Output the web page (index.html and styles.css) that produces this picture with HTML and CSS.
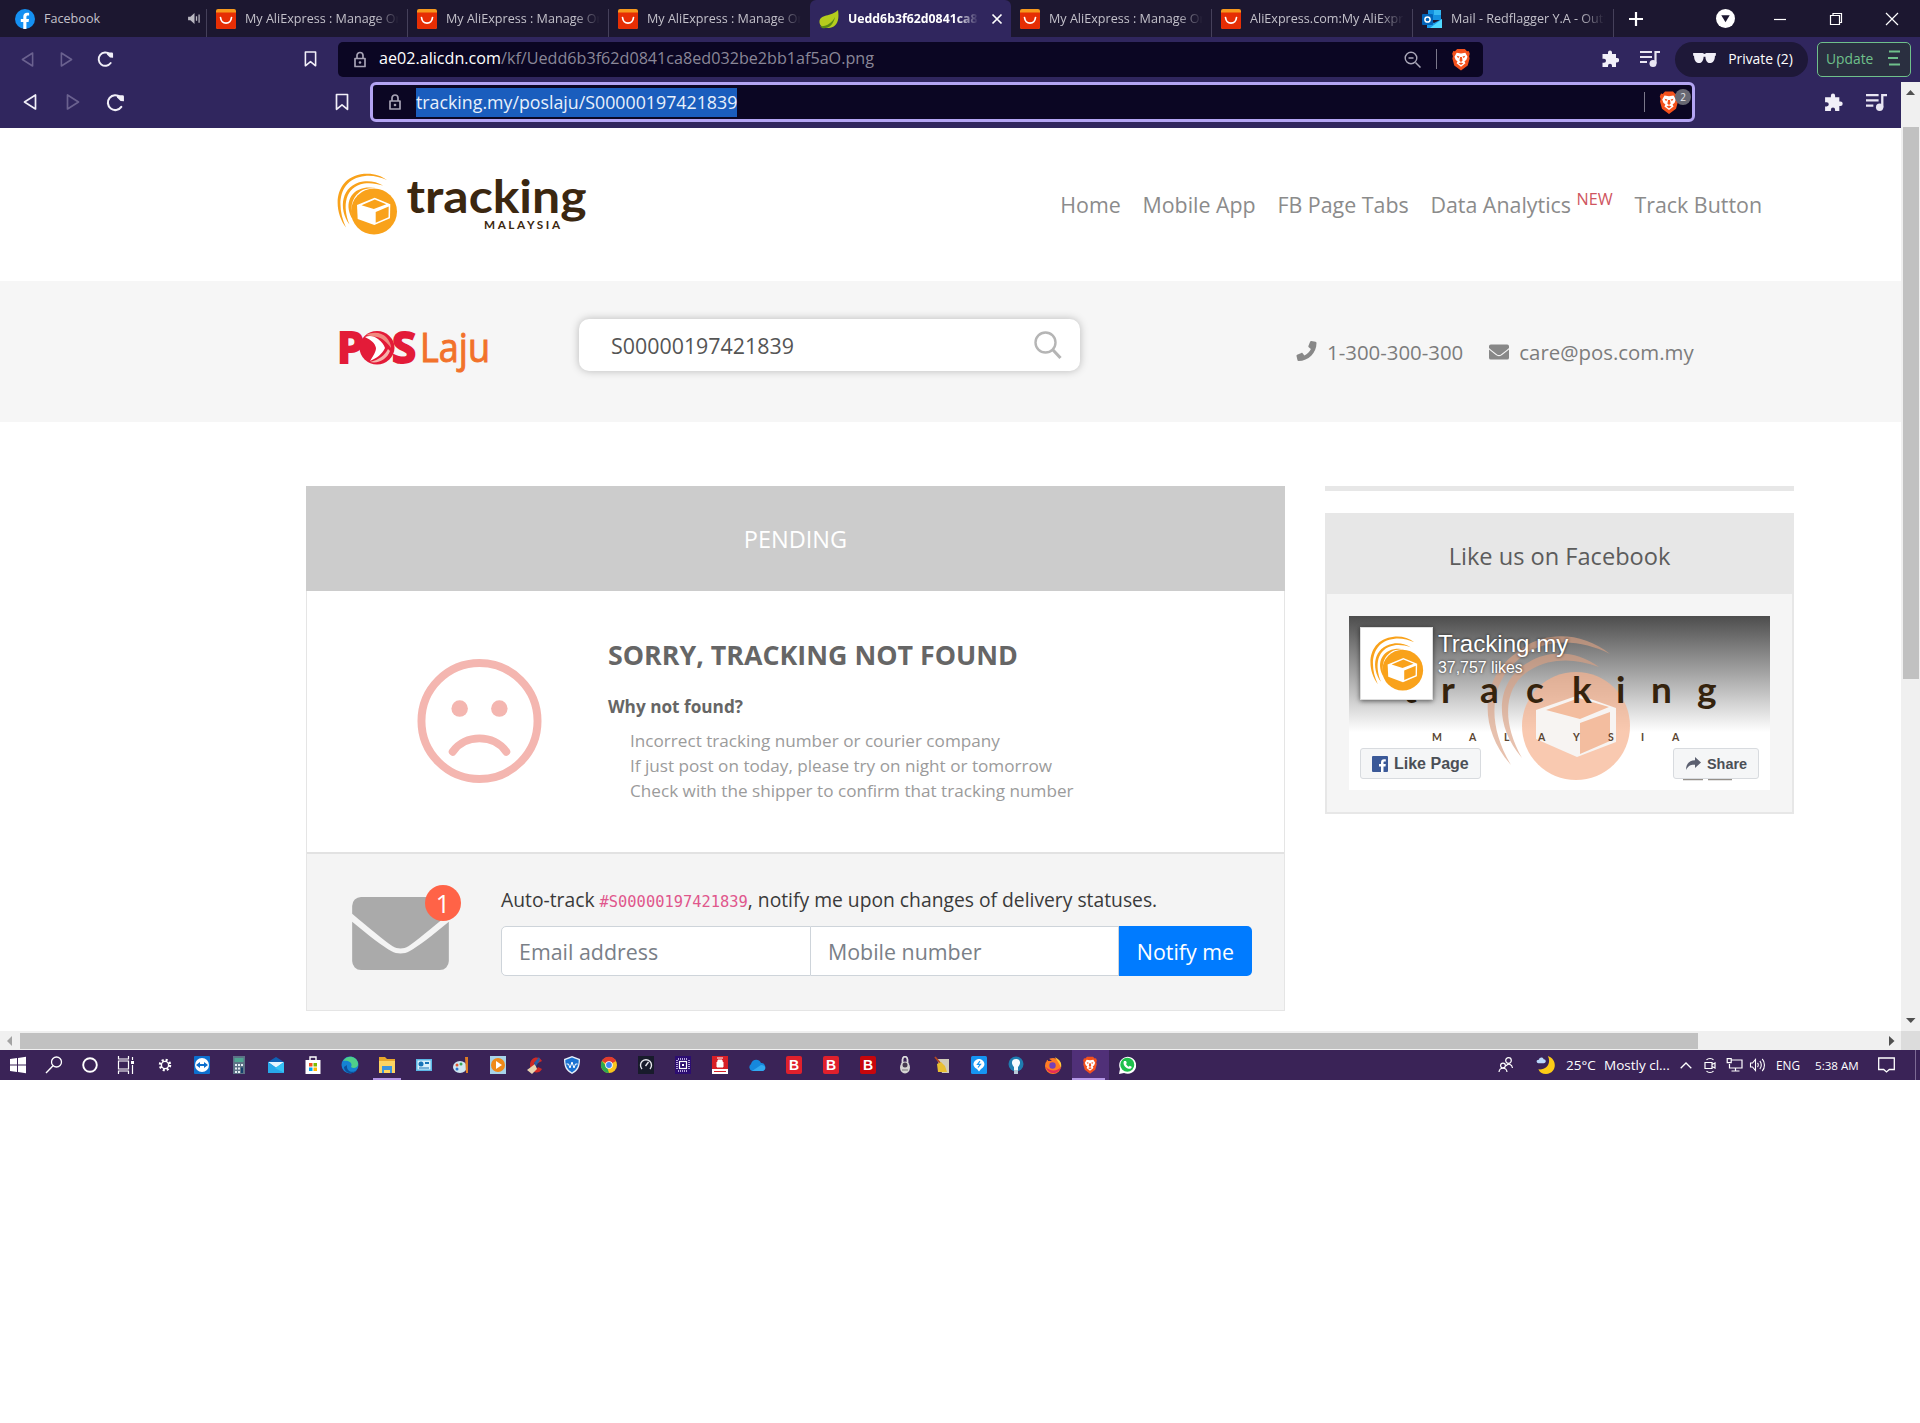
FILE: index.html
```
<!DOCTYPE html>
<html lang="en">
<head>
    <meta charset="UTF-8">
    <meta name="viewport" content="width=device-width, initial-scale=1.0">
    <title>Poslaju Tracking - Tracking.my</title>
    <link rel="stylesheet" href="styles.css">
</head>
<body>
    <!-- shared icons -->
    <svg class="defs" width="0" height="0">
        <symbol id="ali" viewBox="0 0 20 20">
            <rect width="20" height="20" rx="2" fill="#f7981d"/>
            <path d="M0 3.5h20V18a2 2 0 0 1-2 2H2a2 2 0 0 1-2-2z" fill="#e62e04"/>
            <path d="M4.5 8.5c1 7.5 10 7.5 11 0" fill="none" stroke="#fff" stroke-width="1.7" stroke-linecap="round"/>
        </symbol>
        <symbol id="lock" viewBox="0 0 14 16">
            <path d="M2 7h10v8H2zM4 7V4a3 3 0 0 1 6 0v3" fill="none" stroke="#a7a3b5" stroke-width="1.7" stroke-linejoin="round"/>
            <circle cx="7" cy="11" r="1.3" fill="#a7a3b5"/>
        </symbol>
        <symbol id="back" viewBox="0 0 14 18">
            <path d="M12.5 2v14L1.5 9z" fill="none" stroke="currentColor" stroke-width="1.7" stroke-linejoin="round"/>
        </symbol>
        <symbol id="reload" viewBox="0 0 18 18">
            <path d="M14.5 13.2A7 7 0 1 1 13.5 4" fill="none" stroke="#f1eff8" stroke-width="2" stroke-linecap="round"/>
            <path d="M10.5 2.2h5.2a1.3 1.3 0 0 1 1.3 1.3v4.2l-3.2-.2-3.3-3.3z" fill="#f1eff8"/>
        </symbol>
        <symbol id="bookmark" viewBox="0 0 14 18">
            <path d="M1.5 1.5h11v14.8L7 11.8l-5.5 4.5z" fill="none" stroke="#f1eff8" stroke-width="1.7" stroke-linejoin="round"/>
        </symbol>
        <symbol id="brave" viewBox="0 0 20 24">
            <path d="M6 1h8l2.300 2.400L18 3l1.200 3-.8 2.500L19 11l-2 7.200-7 5.300-7-5.300L1 11l.6-2.500L.8 6 2 3l1.700.4z" fill="#f4511c"/>
            <path d="M5.500 5l4.500.7 4.500-.7 2.300 4-1.200 3.200-2 1.800 1 2L10 19.500 5.400 16l1-2-2-1.800L3.200 9z" fill="#fff"/>
            <path d="M5.500 8.200l3 .7-1.500 1.800zM14.500 8.200l-3 .7 1.500 1.800zM9 9.500l-.6 3.800L10 14.500l1.600-1.200-.6-3.800zM7.500 16l2.500-1 2.500 1-2.500 1.700z" fill="#f4511c"/>
        </symbol>
        <symbol id="puzzle" viewBox="0 0 18 18">
            <path d="M7 2.500a2 2 0 0 1 4 0V4h4v4h1a2.200 2.200 0 0 1 0 4.400h-1V17h-4v-1.200a2 2 0 0 0-4 0V17H1.500v-4.300H3a2 2 0 0 0 0-4H1.500V4H7z" fill="#f1eff8"/>
        </symbol>
        <symbol id="music" viewBox="0 0 20 18">
            <path d="M0 2h12M0 7h12M0 12h7" stroke="#e9e6f3" stroke-width="2"/>
            <path d="M15.500 13.500V2H20" fill="none" stroke="#e9e6f3" stroke-width="2.200"/>
            <circle cx="13" cy="13.500" r="3.500" fill="#e9e6f3"/>
        </symbol>
        <symbol id="box" viewBox="0 0 62 62">
            <path d="M10 54.500C-4 36-2 4 28 .8c9-.8 17 1.500 23 6.200-7-3-14-4.700-22-4C2 6 0 33 10 54.500z" fill="#f9a21b"/>
            <path d="M13.500 51.500C2 36 5 12 27 8.600c7-1 14 .4 20 4-6-2-13-3-19-2C9 14 6 33 13.500 51.500z" fill="#f9a21b"/>
            <path d="M17 47C8 33 13 18 28 15c4-.8 8-.5 12 0-8 0-13 1-17 4.500C15 26 14 36 17 47z" fill="#f9a21b"/>
            <circle cx="38" cy="38.500" r="23" fill="#f9a21b"/>
            <path d="M38.700 24.700l15.600 6.600-.3 14L38.300 52l-16.600-6L21 32z" fill="#fff"/>
            <path d="M25.500 32.200l13.300-5.700 11.500 4.800-12.500 4.800zM39.700 39l13-5.400-.2 10.600-12.800 5.500z" fill="#f9a21b"/>
        </symbol>
        <symbol id="envelope" viewBox="0 0 98 74">
            <path d="M0 17V9a9 9 0 0 1 9-9h80a9 9 0 0 1 9 9v8C80 32 66 44 57 50c-5 3-11 3-16 0C32 44 18 32 0 17z" fill="currentColor"/>
            <path d="M0 25c17 14 31 25 40 30 5 3 13 3 18 0 9-5 23-16 40-30v40a9 9 0 0 1-9 9H9a9 9 0 0 1-9-9z" fill="currentColor"/>
        </symbol>
    </svg>

    <div class="tabs">
        <div class="tab">
            <svg class="fav" viewBox="0 0 20 20"><circle cx="10" cy="10" r="10" fill="#1590f2"/><path d="M8.300 20v-7H5.800v-3h2.500V7.800c0-2.600 1.500-4 3.800-4 1 0 2 .2 2 .2v2.500h-1.200c-1.200 0-1.500.7-1.500 1.500v2h2.600l-.4 3h-2.200v7z" fill="#fff"/></svg>
            <span class="tab-title">Facebook</span>
            <svg class="sound" viewBox="0 0 14 12"><path d="M0 4h2.500L7 0v12L2.500 8H0z" fill="#b9b7c1"/><path d="M9.200 3.500v5M12 1.500v9" stroke="#b9b7c1" stroke-width="1.400"/></svg>
        </div>
        <div class="tab"><svg class="fav"><use href="#ali"/></svg><span class="tab-title fade">My AliExpress : Manage Orders</span></div>
        <div class="tab"><svg class="fav"><use href="#ali"/></svg><span class="tab-title fade">My AliExpress : Manage Orders</span></div>
        <div class="tab no-line"><svg class="fav"><use href="#ali"/></svg><span class="tab-title fade">My AliExpress : Manage Orders</span></div>
        <div class="tab active">
            <svg class="fav" viewBox="0 0 20 20"><path d="M19 1c1.500 10-.5 17-9 18-5 .5-9-1.500-9.500-5.500C0 5 12 8 19 1z" fill="#b5cc1d"/><path d="M1 17c6 1 12-3 15-9-2 9-7 12-13 11z" fill="#5a8a12"/></svg>
            <span class="tab-title fade">Uedd6b3f62d0841ca8ed032</span>
            <svg class="close" viewBox="0 0 12 12"><path d="M1.500 1.500l9 9M10.500 1.500l-9 9" stroke="#fff" stroke-width="1.700"/></svg>
        </div>
        <div class="tab"><svg class="fav"><use href="#ali"/></svg><span class="tab-title fade">My AliExpress : Manage Orders</span></div>
        <div class="tab"><svg class="fav"><use href="#ali"/></svg><span class="tab-title fade">AliExpress.com:My AliExpress</span></div>
        <div class="tab">
            <svg class="fav" viewBox="0 0 20 20"><path d="M6 1h13v10H6z" fill="#1490df"/><path d="M12 1h7v5h-7z" fill="#35b8f1"/><path d="M5 10l7 4 8-4v9H5z" fill="#1a9be8"/><path d="M20 10v9H8z" fill="#50d9ff"/><rect y="5" width="11" height="11" rx="1" fill="#0364b8"/><circle cx="5.500" cy="10.500" r="2.600" fill="none" stroke="#fff" stroke-width="1.500"/></svg>
            <span class="tab-title fade">Mail - Redflagger Y.A - Outlook</span>
        </div>
        <svg class="plus" viewBox="0 0 16 16"><path d="M8 1v14M1 8h14" stroke="#fff" stroke-width="2.200"/></svg>
        <svg class="search-tabs" viewBox="0 0 18 18"><circle cx="9" cy="9" r="9" fill="#fff"/><path d="M5 6h8l-4 6.500z" fill="#1c1730"/></svg>
        <svg class="win-btn" viewBox="0 0 14 14"><path d="M1 7.500h12" stroke="#fff" stroke-width="1.200"/></svg>
        <svg class="win-btn" viewBox="0 0 14 14"><path d="M1.500 3.500h9v9h-9zM4 3.500v-2h8.500v9h-2" fill="none" stroke="#fff" stroke-width="1.200"/></svg>
        <svg class="win-btn" viewBox="0 0 14 14"><path d="M1 1l12 12M13 1L1 13" stroke="#fff" stroke-width="1.200"/></svg>
    </div>

    <div class="toolbar">
        <svg class="nav-icon dim"><use href="#back"/></svg>
        <svg class="nav-icon fwd dim"><use href="#back"/></svg>
        <svg class="reload"><use href="#reload"/></svg>
        <svg class="bookmark"><use href="#bookmark"/></svg>
        <div class="url">
            <svg class="lock"><use href="#lock"/></svg>
            <span class="url-text"><b>ae02.alicdn.com</b>/kf/Uedd6b3f62d0841ca8ed032be2bb1af5aO.png</span>
            <svg class="zoom" viewBox="0 0 17 17"><circle cx="7" cy="7" r="5.800" fill="none" stroke="#aaa7b8" stroke-width="1.400"/><path d="M4.500 7h5M11.500 11.500l5 5" stroke="#aaa7b8" stroke-width="1.500"/></svg>
            <i class="sep"></i>
            <svg class="brave"><use href="#brave"/></svg>
        </div>
        <svg class="puzzle"><use href="#puzzle"/></svg>
        <svg class="music"><use href="#music"/></svg>
        <div class="private">
            <svg viewBox="0 0 25 11"><path d="M0 0h10.500l2 1 2-1H25v3h-1c0 5-2 8-5.500 8-3 0-5-3-5-7h-2c0 4-2 7-5 7C3 11 1 8 1 3H0z" fill="#f1eff8"/></svg>
            <span>Private (2)</span>
        </div>
        <div class="update">
            <span>Update</span>
            <svg viewBox="0 0 12 16"><path d="M1 1.500h11M0 8h10M1 14.500h11" stroke="#6fc08b" stroke-width="1.800"/></svg>
        </div>
    </div>

    <div class="window">
        <div class="view">
            <div class="toolbar second">
                <svg class="nav-icon"><use href="#back"/></svg>
                <svg class="nav-icon fwd dim"><use href="#back"/></svg>
                <svg class="reload"><use href="#reload"/></svg>
                <svg class="bookmark"><use href="#bookmark"/></svg>
                <div class="url focus">
                    <svg class="lock"><use href="#lock"/></svg>
                    <span class="selected">tracking.my/poslaju/S00000197421839</span>
                    <i class="sep"></i>
                    <div class="shield">
                        <svg class="brave"><use href="#brave"/></svg>
                        <span class="count">2</span>
                    </div>
                </div>
                <svg class="puzzle"><use href="#puzzle"/></svg>
                <svg class="music"><use href="#music"/></svg>
            </div>

            <div class="header">
                <svg class="logo" viewBox="0 0 250 64">
                    <use href="#box" width="62" height="62"/>
                    <text x="70.500" y="40.300" textLength="180" lengthAdjust="spacingAndGlyphs" class="logo-name">tracking</text>
                    <text x="148" y="56" textLength="76" class="logo-sub">MALAYSIA</text>
                </svg>
                <div class="menu">
                    <a>Home</a>
                    <a>Mobile App</a>
                    <a>FB Page Tabs</a>
                    <a>Data Analytics <sup>NEW</sup></a>
                    <a>Track Button</a>
                </div>
            </div>

            <div class="band">
                <svg class="poslaju" viewBox="0 0 152 44">
                    <text x="-1" y="32.300" class="pos">P</text>
                    <text x="54" y="32.300" class="pos" textLength="24" lengthAdjust="spacingAndGlyphs">S</text>
                    <ellipse cx="39" cy="16.700" rx="17.500" ry="16.700" fill="#e31b38"/>
                    <path d="M28 4c8-4 16-2 20 2 3 3 5 7 5 11-4-6-9-10-14-11-4-1-8-1-11-2z" fill="#f08a80"/>
                    <path d="M27 6c5-2 9-1 13 2 4 3 6 6 7 9-3 6-8 10-15 13 3-5 6-9 6-13-1-5-5-8-11-11z" fill="#fff"/>
                    <path d="M32 31c9-2 15-7 18-13l2 2c-3 8-11 13-20 11z" fill="#f6b2ab"/>
                    <text x="82" y="31.300" textLength="70" lengthAdjust="spacingAndGlyphs" class="laju">Laju</text>
                </svg>
                <div class="search">
                    <span>S00000197421839</span>
                    <svg viewBox="0 0 28 28"><circle cx="11.500" cy="11.500" r="10" fill="none" stroke="#b5b5b5" stroke-width="2.400"/><path d="M19 19l7.500 8" stroke="#b5b5b5" stroke-width="3"/></svg>
                </div>
                <svg class="phone" viewBox="0 0 20 21"><path d="M19 .8L14.800 0c-.5 0-.9.200-1.100.6l-1.800 4.500c-.2.400 0 .9.300 1.100l2.200 1.800c-1.300 2.900-3.600 5.200-6.500 6.500l-1.800-2.300c-.3-.3-.8-.5-1.200-.3L.6 13.800c-.5.2-.7.600-.6 1.100l1 4.300c.1.500.5.800 1 .8C12 20 20 12 20 2c0-.6-.4-1.100-1-1.200z" fill="#888"/></svg>
                <span class="contact">1-300-300-300</span>
                <svg class="mail"><use href="#envelope"/></svg>
                <span class="contact">care@pos.com.my</span>
            </div>

            <div class="main">
                <div class="card">
                    <div class="status">PENDING</div>
                    <div class="not-found">
                        <svg class="sad" viewBox="0 0 126 126"><g fill="none" stroke="#f4b6b0"><circle cx="63" cy="63" r="58.500" stroke-width="8"/><path d="M36 94c12-18 42-18 54 0" stroke-width="8" stroke-linecap="round"/></g><circle cx="43" cy="50.500" r="8.300" fill="#f4b6b0"/><circle cx="83" cy="50.500" r="8.300" fill="#f4b6b0"/></svg>
                        <div>
                            <h2>SORRY, TRACKING NOT FOUND</h2>
                            <h4>Why not found?</h4>
                            <ul>
                                <li>Incorrect tracking number or courier company</li>
                                <li>If just post on today, please try on night or tomorrow</li>
                                <li>Check with the shipper to confirm that tracking number</li>
                            </ul>
                        </div>
                    </div>
                    <div class="notify">
                        <div class="mail-badge">
                            <svg><use href="#envelope"/></svg>
                            <span>1</span>
                        </div>
                        <div class="notify-form">
                            <p>Auto-track <code>#S00000197421839</code>, notify me upon changes of delivery statuses.</p>
                            <div class="fields">
                                <input type="text" placeholder="Email address">
                                <input type="text" placeholder="Mobile number">
                                <button>Notify me</button>
                            </div>
                        </div>
                    </div>
                </div>

                <div class="side">
                    <div class="bar"></div>
                    <div class="fb">
                        <div class="fb-title">Like us on Facebook</div>
                        <div class="fb-body">
                            <div class="cover">
                                <svg class="cover-art" viewBox="0 0 421 174">
                                    <defs><linearGradient id="shade" x1="0" y1="0" x2="0" y2="1"><stop offset="0" stop-color="#4d4d4d"/><stop offset=".5" stop-color="#a5a5a5"/><stop offset="1" stop-color="#fff"/></linearGradient></defs>
                                    <rect width="421" height="174" fill="#fff"/>
                                    <rect width="421" height="116" fill="url(#shade)"/>
                                    <g fill="#dba183" opacity=".65">
                                        <path d="M162 149C126 108 135 60 166 38c26-24 66-23 95 0-30-15-66-17-91 5-28 22-34 62-8 106z"/>
                                        <path d="M173 142C141 104 150 62 180 46c20-12 47-12 70 5-24-9-48-9-67 2-26 14-33 48-10 89z"/>
                                    </g>
                                    <circle cx="227" cy="110" r="54" fill="#f7b28e" opacity=".7"/>
                                    <path d="M187 94l43-15 37 13v34l-39 15-41-18z" fill="#f7f4f2"/>
                                    <path d="M197 94l33-12 30 9-29 12zM231 107l30-11v29l-30 13z" fill="#f3bd9f"/>
                                    <text y="87" x="54 92 131 177 223 267 302 348" class="cover-name">tracking</text>
                                    <text y="125" x="83 120 155 189 224 259 292 323" class="cover-sub">MALAYSIA</text>
                                    <path d="M334 163.500h20M359 163.500h24" stroke="#95908a" stroke-width="1.500"/>
                                </svg>
                                <div class="avatar"><svg><use href="#box"/></svg></div>
                                <div class="fb-name">Tracking.my<small>37,757 likes</small></div>
                                <div class="fb-btn like"><svg viewBox="0 0 16 16"><rect width="16" height="16" rx="1" fill="#3b5998"/><path d="M9 16v-5.500H7V8h2V6.500C9 4.300 10.200 3.300 12 3.300h1.800v2.300h-1.200c-.8 0-1.100.4-1.100 1.100V8h2.300l-.3 2.500h-2V16z" fill="#fff"/></svg>Like Page</div>
                                <div class="fb-btn share"><svg viewBox="0 0 15 14"><path d="M9 0l6 5.500L9 11V7.800C5 7.500 2.500 8.500 0 13c0-6 3-9.500 9-9.800z" fill="#5c6070"/></svg>Share</div>
                            </div>
                        </div>
                    </div>
                </div>
            </div>

            <div class="hscroll">
                <svg viewBox="0 0 20 19"><path d="M12 5v10L7 10z" fill="#a3a3a3"/></svg>
                <div class="hthumb"></div>
                <svg class="end" viewBox="0 0 20 19"><path d="M8 5v10l5.500-5z" fill="#505050"/></svg>
            </div>
        </div>
        <div class="vscroll">
            <svg viewBox="0 0 19 45"><path d="M5 13h9L9.500 8z" fill="#505050"/></svg>
            <div class="vthumb"></div>
            <svg class="end" viewBox="0 0 19 21"><path d="M5 8h9.500l-4.700 5z" fill="#505050"/></svg>
            <div class="corner"></div>
        </div>
    </div>

    <div class="taskbar">
        <div class="sys"><svg viewBox="0 0 18 18"><path d="M1 3l7-1v6.500H1zM9 1.900L17 .8v7.700H9zM1 9.500h7V16l-7-1zM9 9.500h8v7.700l-8-1.100z" fill="#fff"/></svg></div>
        <div class="sys"><svg viewBox="0 0 18 18"><circle cx="11.500" cy="6" r="5" fill="none" stroke="#fff" stroke-width="1.300"/><path d="M8 9.800L1 17" stroke="#fff" stroke-width="1.400"/></svg></div>
        <div class="sys"><svg viewBox="0 0 18 18"><circle cx="9" cy="9" r="6.800" fill="none" stroke="#fff" stroke-width="1.900"/></svg></div>
        <div class="sys wide"><svg viewBox="0 0 18 18"><path d="M1.500 5h10v8h-10zM1.500 0v3h10V0M1.500 18v-3h10v3M15.500 1v3M15.500 9v9" fill="none" stroke="#fff" stroke-width="1.200"/><path d="M14 5h3v3h-3z" fill="#fff"/></svg></div>

        <div class="app"><svg viewBox="0 0 18 18"><circle cx="9" cy="9" r="5" fill="none" stroke="#fff" stroke-width="2.500" stroke-dasharray="2 1.930"/><circle cx="9" cy="9" r="3.600" fill="none" stroke="#fff" stroke-width="1.400"/></svg></div>
        <div class="app"><svg viewBox="0 0 18 18"><rect x="1" width="16" height="18" rx="1" fill="#0d6fce"/><circle cx="9" cy="9" r="7" fill="#fff"/><path d="M3 9l4-3v2h4V6l4 3-4 3v-2H7v2z" fill="#0d6fce"/></svg></div>
        <div class="app"><svg viewBox="0 0 18 18"><rect x="3" width="12" height="18" fill="#5d7286"/><path d="M4.500 2h9v4h-9z" fill="#4fa592"/><path d="M5 8h2v2H5zM8 8h2v2H8zM11 8h2v2h-2zM5 11.500h2v2H5zM8 11.500h2v2H8zM5 15h2v2H5zM8 15h2v2H8z" fill="#e6eef4"/><path d="M11 11.500h2V17h-2z" fill="#15406e"/></svg></div>
        <div class="app"><svg viewBox="0 0 18 18"><path d="M1 6l8-5 8 5v11H1z" fill="#0f62b5"/><path d="M1 6h16l-8 6z" fill="#e6f6ff"/><path d="M1 6l16 11H1z" fill="#28a8ea"/><path d="M17 6L8 12l9 5z" fill="#35c3f5"/></svg></div>
        <div class="app"><svg viewBox="0 0 18 18"><path d="M6 4V1h6v3" fill="none" stroke="#fff" stroke-width="1.400"/><path d="M1.500 4h15v14h-15z" fill="#fff"/><path d="M5 7h3.500v3.500H5z" fill="#f25022"/><path d="M9.500 7H13v3.500H9.500z" fill="#7fba00"/><path d="M5 11.500h3.500V15H5z" fill="#00a4ef"/><path d="M9.500 11.500H13V15H9.500z" fill="#ffb900"/></svg></div>
        <div class="app"><svg viewBox="0 0 18 18"><circle cx="9" cy="9" r="8.500" fill="#1582d2"/><path d="M2 5c4-7 14-5 15 2 1 5-5 6-7 4 2-4-2-7-8-6z" fill="#4fd08a"/><path d="M6 9c-1 6 5 9 10 5-4 6-13 3-13-3z" fill="#0c4f9c"/></svg></div>
        <div class="app open"><svg viewBox="0 0 18 18"><path d="M1 1h6l2 2h8v14H1z" fill="#e8a72b"/><path d="M1 5h16v12H1z" fill="#fcd462"/><path d="M4 10h10v7h-2v-3H6v3H4z" fill="#3c95dd"/></svg></div>
        <div class="app"><svg viewBox="0 0 18 18"><rect x="1" y="3" width="16" height="12" fill="#5cb8e6"/><rect x="2.500" y="4.500" width="13" height="9" fill="#d9f0fb"/><circle cx="6" cy="8" r="2.500" fill="#1673b8"/><path d="M10 6h4v2h-4zM4 11.500h10v1H4z" fill="#1673b8"/></svg></div>
        <div class="app"><svg viewBox="0 0 18 18"><ellipse cx="8" cy="11" rx="7" ry="6" fill="#cfe6f2"/><circle cx="5" cy="9" r="1.500" fill="#e4572e"/><circle cx="9" cy="8" r="1.500" fill="#3aa757"/><circle cx="5" cy="13" r="1.500" fill="#2a78d0"/><path d="M13 1h3v16h-2z" fill="#df7b23"/></svg></div>
        <div class="app"><svg viewBox="0 0 18 18"><rect x="1" width="16" height="18" fill="#a8d3ea"/><circle cx="9" cy="9" r="7" fill="#f08a18"/><path d="M7 5l6 4-6 4z" fill="#fff"/></svg></div>
        <div class="app"><svg viewBox="0 0 18 18"><path d="M16 5C13-1 4 1 4 9s9 10 12 4l-4-2c-1 3-4 1-4-2s3-5 4-2z" fill="#cf2a25"/><path d="M1 14l8-6 2 5-5 5z" fill="#e9d5b0"/><path d="M8 7l5-6 1 3-4 6z" fill="#2a5fa5"/></svg></div>
        <div class="app"><svg viewBox="0 0 18 18"><path d="M9 0l8 3c0 8-2 12-8 15C3 15 1 11 1 3z" fill="#e6f1fb"/><path d="M9 1.500l6.700 2.500c0 6-2 9.500-6.700 12.500-4.700-3-6.700-6.500-6.700-12.500z" fill="#1b72d2"/><path d="M3.500 8h2l1.500 4 2-6 2 6 1.500-4h2" fill="none" stroke="#fff" stroke-width="1"/></svg></div>
        <div class="app"><svg viewBox="0 0 18 18"><circle cx="9" cy="9" r="8" fill="#f9c51d"/><path d="M9 9L2 5a8 8 0 0 1 14 0z" fill="#e33b2e"/><path d="M2 5l5 6 2 6A8 8 0 0 1 2 5z" fill="#2da94f"/><circle cx="9" cy="9" r="3.800" fill="#fff"/><circle cx="9" cy="9" r="2.900" fill="#4285f4"/></svg></div>
        <div class="app"><svg viewBox="0 0 18 18"><rect x="1" width="16" height="18" fill="#181b2b"/><path d="M5 13a5.500 5.500 0 1 1 8 0M8.500 10l3-4" fill="none" stroke="#e8e8ee" stroke-width="1.400"/></svg></div>
        <div class="app"><svg viewBox="0 0 18 18"><rect x="1" width="16" height="18" fill="#2c0d71"/><rect x="5.500" y="5.500" width="7" height="7" fill="none" stroke="#fff" stroke-width="1.200"/><path d="M4 3h10M4 15h10M3 4v10M15 4v10" stroke="#e6dcff" stroke-width="1.500" stroke-dasharray="1 1"/><path d="M8 8h2v2H8z" fill="#fff"/></svg></div>
        <div class="app"><svg viewBox="0 0 18 18"><rect x="1" width="16" height="18" fill="#d81f26"/><path d="M1 13h16v5H1z" fill="#fff"/><path d="M6 6h6v5H6zM7 6V4h4v2M6 2h6" fill="#fff" stroke="#fff"/><path d="M3 15.500h12" stroke="#d81f26"/></svg></div>
        <div class="app"><svg viewBox="0 0 18 18"><path d="M4 15a4 4 0 0 1-1-7c1-5 8-6 10-1 4 0 5 4 4 6-1 2-2 2-4 2z" fill="#1688dd"/><path d="M4 15l9-6c3 0 5 2 4 4s-2 2-4 2z" fill="#32a9f0"/></svg></div>
        <div class="app"><span class="bit">B</span></div>
        <div class="app"><span class="bit">B</span></div>
        <div class="app"><span class="bit dark">B</span></div>
        <div class="app"><svg viewBox="0 0 18 18"><path d="M6.500 8V3.500C7-.3 11-.3 11.500 3.500V8" fill="none" stroke="#ddd" stroke-width="1.800"/><ellipse cx="9" cy="11.500" rx="5" ry="6" fill="#d5d5d3"/><circle cx="9" cy="9" r="2.500" fill="#453b4f"/><path d="M6 14h6" stroke="#777"/></svg></div>
        <div class="app"><svg viewBox="0 0 18 18"><path d="M4 3h12v14H9z" fill="#d2ccb8"/><path d="M2 1l6 7" stroke="#b3471f" stroke-width="1.800"/><path d="M4 8l4-2 4 4 2 6H5z" fill="#e9bf31"/></svg></div>
        <div class="app"><svg viewBox="0 0 18 18"><rect x="1" width="16" height="18" rx="1.500" fill="#1694f2"/><path d="M9 15.500l-2-2.500C0 9 5 3 9 3s9 6 2 10z" fill="#fff"/><path d="M10 5L7.500 8.300h3L8 11.500" fill="none" stroke="#1694f2" stroke-width="1.200"/></svg></div>
        <div class="app"><svg viewBox="0 0 18 18"><circle cx="9" cy="8" r="7.500" fill="#1f7db0"/><path d="M9 3c5 0 5 5 2 8v3H7v-3C4 8 4 3 9 3z" fill="#f5fbff"/><path d="M7 14h4v4H7z" fill="#b6cad6"/></svg></div>
        <div class="app"><svg viewBox="0 0 18 18"><circle cx="9" cy="10" r="8" fill="#ff7b24"/><path d="M11 1c5 3 7 6 6 11-1-4-4-7-6-11z" fill="#ffcb3c"/><path d="M2 11c2 8 13 8 15 0-3 4-11 5-15 0z" fill="#e62c58"/><path d="M4 2l4 3H4z" fill="#3a2357"/><circle cx="8.500" cy="9.500" r="3.200" fill="#7441b8"/></svg></div>
        <div class="app running"><svg><use href="#brave"/></svg></div>
        <div class="app"><svg viewBox="0 0 18 18"><path d="M1 18l1-5A8.500 8.500 0 1 1 6 17z" fill="#fff"/><circle cx="9.300" cy="8.700" r="7" fill="#1fc04c"/><path d="M6 5l2 0 .8 2-.8 1c.5 1.200 1.500 2 2.700 2.700l1-1 2 1c0 2-2 2.500-4 1.800C7 11.500 4.500 8 6 5z" fill="#fff"/></svg></div>

        <div class="tray">
            <svg class="people" viewBox="0 0 16 16"><g fill="none" stroke="#fff" stroke-width="1.200"><circle cx="10.500" cy="3.500" r="2.800"/><path d="M8 9c2-3 6-2 6.500 2"/><circle cx="5" cy="8.500" r="2.400"/><path d="M1 15c.5-5 7.500-5 8 0"/></g></svg>
            <svg class="moon" viewBox="0 0 20 20"><path d="M12 0c10 3 10 18-2 19-4 0-7-2-8-5 8 1 14-6 10-14z" fill="#fccb16"/><path d="M2 7.500C-1 7 0 3.500 2.500 4 3 1 7 1 7.500 3.500c3 0 3 4 0 4z" fill="#b9d8fb"/></svg>
            <span class="temp">25°C</span>
            <span class="weather">Mostly cl...</span>
            <svg class="chev" viewBox="0 0 12 7"><path d="M.7 6.300L6 1l5.300 5.300" fill="none" stroke="#fff" stroke-width="1.300"/></svg>
            <svg class="cam" viewBox="0 0 12 16"><path d="M1 5h7v6H1zM8 7l3-1.500v5L8 9M2.500 2.500C4 .5 8 .5 9.500 2.500M2.500 13.500c1.500 2 5.500 2 7 0" fill="none" stroke="#fff" stroke-width="1.200"/></svg>
            <svg class="net" viewBox="0 0 16 14"><path d="M5 2h10.500v8H3V6M.7.700h4v4h-4zM9 10v3M5 13h8" fill="none" stroke="#fff" stroke-width="1.200"/></svg>
            <svg class="vol" viewBox="0 0 16 14"><path d="M1 5h2l3-3.500v11L3 9H1zM8 5c1 1 1 3 0 4M10.300 3c2 2 2 6 0 8M12.700 1c3 3 3 9 0 12" fill="none" stroke="#fff" stroke-width="1.100"/></svg>
            <span class="lang">ENG</span>
            <span class="clock">5:38 AM</span>
            <svg class="note" viewBox="0 0 17 16"><path d="M.7 1h15.600v11.500h-5L8.500 15l-2.800-2.500h-5z" fill="none" stroke="#fff" stroke-width="1.300"/></svg>
            <i class="show-desktop"></i>
        </div>
    </div>
</body>
</html>
```
FILE: styles.css
```
* {
    box-sizing: border-box;
}

body {
    margin: 0;
    width: 1920px;
    background: #fff;
    font-family: "Open Sans", "Noto Sans", sans-serif;
    overflow: hidden;
}

svg {
    display: block;
    flex: none;
}

.defs {
    position: absolute;
}

/* browser tabs */
.tabs {
    display: flex;
    align-items: center;
    height: 37px;
    padding-left: 6px;
    background: #1c1730;
}

.tab {
    display: flex;
    flex: none;
    align-items: center;
    width: 201px;
    height: 37px;
    padding: 0 6px 0 9px;
    color: #c3c1ca;
    font-size: 12.6px;
    background: linear-gradient(#45405a, #45405a) right bottom / 1px 28px no-repeat;
}

.tab.no-line,
.tab.active {
    background: none;
}

.tab.active {
    background: #30265e;
    border-radius: 6px 6px 0 0;
    color: #fff;
    font-weight: bold;
    font-size: 12.3px;
}

.fav {
    width: 20px;
    height: 20px;
    margin-right: 9px;
}

.tab-title {
    flex: 1;
    overflow: hidden;
    white-space: nowrap;
}

.fade {
    -webkit-mask-image: linear-gradient(90deg, #000 82%, transparent 98%);
    mask-image: linear-gradient(90deg, #000 82%, transparent 98%);
}

.sound {
    width: 13px;
    height: 11px;
}

.close {
    width: 12px;
    height: 12px;
    margin: 0 2px 0 10px;
}

.plus {
    width: 16px;
    height: 16px;
    margin-left: 14px;
}

.search-tabs {
    width: 19px;
    height: 19px;
    margin: 0 38px 0 72px;
}

.win-btn {
    width: 14px;
    height: 14px;
    margin-right: 42px;
}

.win-btn:last-child {
    margin-right: 0;
}

/* address bars */
.toolbar {
    display: flex;
    align-items: center;
    height: 45px;
    padding: 0 9px 1px 21px;
    background: #30265e;
    color: #f1eff8;
}

.nav-icon {
    width: 13px;
    height: 17px;
}

.fwd {
    margin-left: 26px;
    transform: scaleX(-1);
}

.dim {
    color: #6a618f;
}

.reload {
    width: 17px;
    height: 18px;
    margin-left: 24px;
}

.bookmark {
    width: 13px;
    height: 18px;
    margin-left: 190px;
}

.url {
    display: flex;
    align-items: center;
    width: 1146px;
    height: 35px;
    margin-left: 21px;
    padding-left: 15px;
    background: #0b0623;
    border-radius: 5px;
    font-size: 16.15px;
    color: #8a8798;
}

.url-text {
    flex: 1;
    margin-left: 12px;
    padding-bottom: 2px;
}

.url-text b {
    font-weight: normal;
    color: #fff;
}

.lock {
    width: 14px;
    height: 17px;
}

.zoom {
    width: 17px;
    height: 17px;
}

.sep {
    width: 1px;
    height: 20px;
    margin: 0 14px 0 15px;
    background: #7a778a;
}

.brave {
    width: 20px;
    height: 23px;
    margin-right: 12px;
}

.puzzle {
    width: 18px;
    height: 18px;
    margin-left: 118px;
}

.music {
    width: 20px;
    height: 18px;
    margin-left: 21px;
}

.private {
    display: flex;
    align-items: center;
    width: 133px;
    height: 35px;
    margin-left: 15px;
    padding: 0 0 2px 17px;
    background: #1e1838;
    border-radius: 18px;
    font-size: 13.9px;
    color: #fff;
}

.private svg {
    width: 25px;
    height: 10px;
    margin-right: 11px;
}

.update {
    display: flex;
    align-items: center;
    justify-content: space-between;
    width: 94px;
    height: 35px;
    margin-left: 9px;
    padding: 0 10px 2px 8px;
    border: 1.5px solid #6fc08b;
    border-radius: 5px;
    background: #2a2f40;
    font-size: 13.8px;
    color: #6fc08b;
}

.update svg {
    width: 12px;
    height: 16px;
}

.window {
    display: flex;
    height: 968px;
}

.view {
    width: 1901px;
}

.second {
    height: 46px;
    padding: 0 0 6px 23px;
}

.second .nav-icon {
    width: 14px;
    height: 18px;
}

.second .fwd {
    margin-left: 29px;
}

.second .reload {
    width: 19px;
    height: 19px;
    margin-left: 26px;
}

.second .bookmark {
    width: 14px;
    height: 18px;
    margin-left: 210px;
}

.focus {
    width: 1325px;
    height: 40px;
    border: 3px solid #b3a4f3;
    border-radius: 6px;
}

.focus .lock {
    height: 18px;
}

.selected {
    margin: 0 auto 0 14px;
    padding-bottom: 1px;
    line-height: 28px;
    background: #1a5dbd;
    color: #e8f0fb;
    font-size: 17.8px;
}

.shield {
    position: relative;
    margin-right: 1px;
}

.shield .brave {
    height: 25px;
}

.count {
    position: absolute;
    top: -1px;
    left: 16px;
    width: 16px;
    height: 16px;
    border-radius: 50%;
    background: #686873;
    color: #e6e6ea;
    font-size: 10px;
    line-height: 16px;
    text-align: center;
}

.second .puzzle {
    width: 20px;
    height: 19px;
    margin-left: 128px;
}

.second .music {
    width: 21px;
    height: 19px;
    margin-left: 23px;
}

/* site header */
.header {
    display: flex;
    justify-content: space-between;
    height: 153px;
    padding: 45px 139px 0 336px;
}

.logo {
    width: 250px;
    height: 64px;
    overflow: visible;
}

.logo-name {
    font: bold 46px Lato, sans-serif;
    fill: #3b2710;
}

.logo-sub {
    font: bold 11.7px Lato, sans-serif;
    fill: #3b2710;
}

.menu {
    display: flex;
    gap: 21.7px;
    padding-top: 16px;
    font-size: 21.4px;
    line-height: 32px;
    color: #8b8b8b;
}

.menu sup {
    font-size: 16.2px;
    line-height: 0;
    color: #cf5560;
    vertical-align: 8px;
}

/* courier band */
.band {
    display: flex;
    height: 141px;
    padding: 38px 0 0 338px;
    background: #f6f6f6;
}

.poslaju {
    width: 152px;
    height: 44px;
    margin-top: 12px;
    overflow: visible;
}

.pos {
    font: bold 43px "Open Sans", sans-serif;
    fill: #e31b38;
    stroke: #e31b38;
    stroke-width: 2;
}

.laju {
    font: 40px "Open Sans", sans-serif;
    fill: #f2722b;
    stroke: #f2722b;
}

.search {
    display: flex;
    align-items: center;
    justify-content: space-between;
    width: 501px;
    height: 52px;
    margin-left: 89px;
    padding: 0 18px 0 32px;
    border-radius: 10px;
    background: #fff;
    box-shadow: 0 0 8px rgba(0, 0, 0, .25);
    font-size: 21.4px;
    color: #555;
}

.search svg {
    width: 28px;
    height: 28px;
}

.phone {
    width: 21px;
    height: 21px;
    margin: 22px 10px 0 216px;
}

.contact {
    padding-top: 17px;
    font-size: 20.4px;
    line-height: 32px;
    color: #7c7c7c;
}

.mail {
    width: 20px;
    height: 16px;
    margin: 25px 10px 0 26px;
    color: #888;
}

/* content */
.main {
    display: flex;
    align-items: flex-start;
    height: 609px;
    padding: 64px 0 0 306px;
}

.card {
    width: 979px;
    height: 525px;
    border: 1px solid #e5e5e5;
    border-top: 0;
}

.status {
    height: 105px;
    margin: 0 -1px;
    background: #ccc;
    color: #fff;
    font-size: 23.5px;
    line-height: 107px;
    text-align: center;
}

.not-found {
    display: flex;
    height: 261px;
    padding-left: 110px;
}

.sad {
    width: 125px;
    height: 126px;
    margin: 67px 66px 0 0;
}

.not-found h2 {
    margin: 47px 0 0;
    font-size: 26.8px;
    line-height: 34px;
    color: #666;
}

.not-found h4 {
    margin: 22px 0 0;
    font-size: 17.2px;
    line-height: 26px;
    color: #666;
}

.not-found ul {
    margin: 8px 0 0;
    padding: 0 0 0 22px;
    list-style: none;
    font-size: 17.15px;
    line-height: 25.2px;
    color: #9b9b9b;
}

.notify {
    display: flex;
    height: 158px;
    padding-left: 45px;
    border-top: 2px solid #e2e2e2;
    background: #f4f4f4;
}

.mail-badge {
    position: relative;
    padding-top: 43px;
    color: #aaa;
}

.mail-badge svg {
    width: 97px;
    height: 73px;
}

.mail-badge span {
    position: absolute;
    top: 31px;
    left: 73px;
    width: 36px;
    height: 36px;
    border-radius: 50%;
    background: #ff6347;
    color: #fff;
    font-size: 25px;
    line-height: 36px;
    text-align: center;
}

.notify-form {
    margin-left: 52px;
}

.notify p {
    margin: 30px 0 8px;
    font-size: 19.3px;
    line-height: 31px;
    color: #3a3a3a;
    white-space: nowrap;
}

.notify code {
    font-family: "DejaVu Sans Mono", monospace;
    font-size: 15.4px;
    color: #e0578c;
}

.fields {
    display: flex;
    width: 751px;
    height: 50px;
}

.fields input {
    width: 310px;
    padding: 0 17px;
    border: 1px solid #ced4da;
    border-radius: 5px 0 0 5px;
    font-family: inherit;
    font-size: 21.4px;
}

.fields input + input {
    width: 308px;
    border-left: 0;
    border-radius: 0;
}

.fields input::placeholder {
    color: #7a8087;
}

.fields button {
    flex: 1;
    padding: 0;
    border: 0;
    border-radius: 0 5px 5px 0;
    background: #007bff;
    color: #fff;
    font-family: inherit;
    font-size: 21.4px;
}

/* facebook box */
.side {
    width: 469px;
    margin-left: 40px;
}

.bar {
    height: 5px;
    margin-bottom: 22px;
    background: #e7e7e7;
}

.fb {
    height: 301px;
    border: 2px solid #e7e7e7;
    background: #f5f5f5;
}

.fb-title {
    height: 79px;
    background: #e7e7e7;
    color: #5c5c5c;
    font-size: 23.6px;
    line-height: 82px;
    text-align: center;
}

.fb-body {
    padding: 22px;
}

.cover {
    position: relative;
    width: 421px;
    height: 174px;
    font-family: "Liberation Sans", Arial, sans-serif;
}

.cover-art {
    width: 421px;
    height: 174px;
}

.cover-name {
    font: bold 37px Lato, sans-serif;
    fill: #35230d;
}

.cover-sub {
    font: bold 10.5px Lato, sans-serif;
    fill: #5b4632;
}

.avatar {
    position: absolute;
    top: 11px;
    left: 11px;
    width: 73px;
    height: 73px;
    padding: 8px;
    background: #fff;
    border: 1px solid #ddd;
    box-shadow: 0 1px 5px rgba(0, 0, 0, .6);
}

.avatar svg {
    width: 55px;
    height: 55px;
}

.fb-name {
    position: absolute;
    top: 14px;
    left: 89px;
    color: #fff;
    font-size: 24.1px;
    line-height: 27px;
    text-shadow: 0 0 3px rgba(0, 0, 0, .8);
}

.fb-name small {
    display: block;
    font-size: 15.9px;
    line-height: 21px;
}

.fb-btn {
    position: absolute;
    top: 132px;
    display: flex;
    align-items: center;
    height: 31px;
    border: 1px solid #d8dbdf;
    border-radius: 3px;
    background: #f5f6f7;
    color: #4b4f56;
    font-size: 16px;
    font-weight: bold;
}

.fb-btn svg {
    width: 16px;
    height: 16px;
    margin-right: 6px;
}

.like {
    left: 11px;
    width: 121px;
    padding-left: 11px;
}

.share {
    left: 324px;
    width: 86px;
    padding-left: 12px;
    font-size: 14.4px;
}

.share svg {
    width: 15px;
}

/* scrollbars */
.hscroll {
    display: flex;
    align-items: center;
    height: 19px;
    background: #f0f0f0;
}

.hscroll svg {
    width: 20px;
    height: 19px;
}

.hthumb {
    width: 1678px;
    height: 16px;
    background: #c1c1c1;
}

.hscroll .end {
    margin-left: auto;
}

.vscroll {
    display: flex;
    flex-direction: column;
    width: 19px;
    background: #f0f0f0;
}

.vscroll svg {
    width: 19px;
}

.vscroll svg:first-child {
    height: 45px;
}

.vthumb {
    height: 552px;
    margin: 0 1px 0 2px;
    background: #c1c1c1;
}

.vscroll .end {
    height: 21px;
    margin-top: auto;
}

.corner {
    height: 19px;
    background: #dcdcdc;
}

/* windows taskbar */
.taskbar {
    display: flex;
    height: 30px;
    background: #3a2357;
    color: #fff;
}

.sys,
.app {
    display: flex;
    align-items: center;
    justify-content: center;
    flex: none;
    width: 36px;
}

.sys.wide {
    margin-right: 2.5px;
}

.app {
    width: 37px;
}

.sys svg,
.app svg {
    width: 18px;
    height: 18px;
}

.open {
    background: linear-gradient(#b497e6, #b497e6) center bottom / 28px 2px no-repeat;
}

.running {
    background: linear-gradient(#b497e6, #b497e6) left bottom / 33px 2px no-repeat, #503078;
}

.bit {
    width: 16px;
    height: 18px;
    border-radius: 2px;
    background: #e0202c;
    font: bold 14px/18px "Liberation Sans", Arial, sans-serif;
    text-align: center;
}

.bit.dark {
    background: #c8060c;
}

.tray {
    display: flex;
    align-items: center;
    margin-left: auto;
    font-size: 12.5px;
    white-space: nowrap;
}

.people {
    width: 16px;
    height: 16px;
}

.moon {
    width: 20px;
    height: 19px;
    margin-left: 22px;
}

.temp {
    width: 38px;
    margin-left: 10px;
    font-size: 13.5px;
}

.weather {
    width: 66px;
    font-size: 13.5px;
}

.chev {
    width: 12px;
    height: 7px;
    margin-left: 10px;
}

.cam {
    width: 12px;
    height: 17px;
    margin-left: 12px;
}

.net {
    width: 17px;
    height: 14px;
    margin-left: 10px;
}

.vol {
    width: 17px;
    height: 14px;
    margin-left: 6px;
}

.lang {
    width: 39px;
    margin-left: 10px;
    font-size: 11.8px;
}

.clock {
    width: 63px;
    font-size: 11.6px;
}

.note {
    width: 17px;
    height: 16px;
}

.show-desktop {
    width: 1px;
    height: 30px;
    margin: 0 4px 0 20px;
    background: #7d6a94;
}
```
